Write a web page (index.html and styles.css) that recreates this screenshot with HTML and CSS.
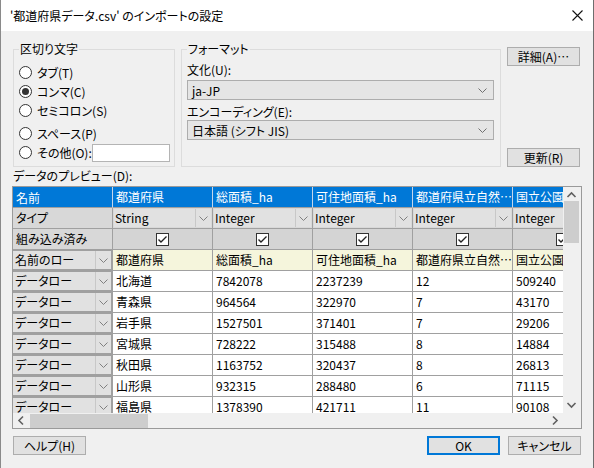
FILE: index.html
```html
<!DOCTYPE html>
<html lang="ja">

<head>
    <meta charset="UTF-8" />
    <title>インポートの設定</title>
    <link rel="stylesheet" href="styles.css">
</head>

<body>
    <div class="window">
        <!-- Title bar -->
        <div class="titlebar">
            <span class="title">'都道府県データ.csv' のインポートの設定</span>
            <svg class="close" width="11" height="11" viewBox="0 0 11 11">
                <path d="M0.5 0.5L10.5 10.5M10.5 0.5L0.5 10.5" stroke="#111" stroke-width="1.1" fill="none" />
            </svg>
        </div>

        <div class="content">
            <!-- Options -->
            <div class="top">
                <fieldset class="group delim">
                    <legend>区切り文字</legend>
                    <div class="radio"><span class="circle"></span>タブ(T)</div>
                    <div class="radio"><span class="circle checked"></span>コンマ(C)</div>
                    <div class="radio"><span class="circle"></span>セミコロン(S)</div>
                    <div class="radio space"><span class="circle"></span>スペース(P)</div>
                    <div class="radio"><span class="circle"></span>その他(O):<span class="textbox"></span></div>
                </fieldset>

                <fieldset class="group format">
                    <legend>フォーマット</legend>
                    <div class="field-label">文化(U):</div>
                    <div class="combo">
                        <span>ja-JP</span>
                        <svg width="9" height="5" viewBox="0 0 9 5"><path d="M0.5 0.5L4.5 4.5L8.5 0.5" stroke="#707070" fill="none" /></svg>
                    </div>
                    <div class="field-label second">エンコーディング(E):</div>
                    <div class="combo">
                        <span>日本語 (シフト JIS)</span>
                        <svg width="9" height="5" viewBox="0 0 9 5"><path d="M0.5 0.5L4.5 4.5L8.5 0.5" stroke="#707070" fill="none" /></svg>
                    </div>
                </fieldset>

                <div class="side-buttons">
                    <button class="btn">詳細(A)…</button>
                    <button class="btn">更新(R)</button>
                </div>
            </div>

            <div class="preview-label">データのプレビュー(D):</div>

            <!-- Preview grid -->
            <div class="grid">
                <div class="grid-main">
                    <div class="viewport">
                        <div class="row head">
                            <div class="cell rh">名前</div>
                            <div class="cell">都道府県</div>
                            <div class="cell">総面積_ha</div>
                            <div class="cell">可住地面積_ha</div>
                            <div class="cell">都道府県立自然…</div>
                            <div class="cell">国立公園面積_ha</div>
                        </div>
                        <div class="row types">
                            <div class="cell rh">タイプ</div>
                            <div class="cell"><div class="cb"><span>String</span><i class="dd"></i></div></div>
                            <div class="cell"><div class="cb"><span>Integer</span><i class="dd"></i></div></div>
                            <div class="cell"><div class="cb"><span>Integer</span><i class="dd"></i></div></div>
                            <div class="cell"><div class="cb"><span>Integer</span><i class="dd"></i></div></div>
                            <div class="cell"><div class="cb"><span>Integer</span><i class="dd"></i></div></div>
                        </div>
                        <div class="row checks">
                            <div class="cell rh">組み込み済み</div>
                            <div class="cell"><span class="check"></span></div>
                            <div class="cell"><span class="check"></span></div>
                            <div class="cell"><span class="check"></span></div>
                            <div class="cell"><span class="check"></span></div>
                            <div class="cell"><span class="check"></span></div>
                        </div>
                        <div class="row names">
                            <div class="cell rh"><div class="cb"><span>名前のロー</span><i class="dd"></i></div></div>
                            <div class="cell">都道府県</div>
                            <div class="cell">総面積_ha</div>
                            <div class="cell">可住地面積_ha</div>
                            <div class="cell">都道府県立自然…</div>
                            <div class="cell">国立公園面積_ha</div>
                        </div>
                        <div class="row">
                            <div class="cell rh"><div class="cb"><span>データロー</span><i class="dd"></i></div></div>
                            <div class="cell">北海道</div><div class="cell">7842078</div><div class="cell">2237239</div><div class="cell">12</div><div class="cell">509240</div>
                        </div>
                        <div class="row">
                            <div class="cell rh"><div class="cb"><span>データロー</span><i class="dd"></i></div></div>
                            <div class="cell">青森県</div><div class="cell">964564</div><div class="cell">322970</div><div class="cell">7</div><div class="cell">43170</div>
                        </div>
                        <div class="row">
                            <div class="cell rh"><div class="cb"><span>データロー</span><i class="dd"></i></div></div>
                            <div class="cell">岩手県</div><div class="cell">1527501</div><div class="cell">371401</div><div class="cell">7</div><div class="cell">29206</div>
                        </div>
                        <div class="row">
                            <div class="cell rh"><div class="cb"><span>データロー</span><i class="dd"></i></div></div>
                            <div class="cell">宮城県</div><div class="cell">728222</div><div class="cell">315488</div><div class="cell">8</div><div class="cell">14884</div>
                        </div>
                        <div class="row">
                            <div class="cell rh"><div class="cb"><span>データロー</span><i class="dd"></i></div></div>
                            <div class="cell">秋田県</div><div class="cell">1163752</div><div class="cell">320437</div><div class="cell">8</div><div class="cell">26813</div>
                        </div>
                        <div class="row">
                            <div class="cell rh"><div class="cb"><span>データロー</span><i class="dd"></i></div></div>
                            <div class="cell">山形県</div><div class="cell">932315</div><div class="cell">288480</div><div class="cell">6</div><div class="cell">71115</div>
                        </div>
                        <div class="row">
                            <div class="cell rh"><div class="cb"><span>データロー</span><i class="dd"></i></div></div>
                            <div class="cell">福島県</div><div class="cell">1378390</div><div class="cell">421711</div><div class="cell">11</div><div class="cell">90108</div>
                        </div>
                    </div>

                    <!-- vertical scrollbar -->
                    <div class="vscroll">
                        <svg class="arrow" width="17" height="17" viewBox="0 0 17 17"><path d="M4.5 10L8.5 6L12.5 10" stroke="#606060" stroke-width="1.6" fill="none" /></svg>
                        <div class="vtrack"><div class="vthumb"></div></div>
                        <svg class="arrow" width="17" height="17" viewBox="0 0 17 17"><path d="M4.5 7L8.5 11L12.5 7" stroke="#606060" stroke-width="1.6" fill="none" /></svg>
                    </div>
                </div>

                <div class="grid-foot">
                    <div class="hscroll">
                        <svg class="arrow" width="17" height="15" viewBox="0 0 17 15"><path d="M10 3.5L6 7.5L10 11.5" stroke="#606060" stroke-width="1.6" fill="none" /></svg>
                        <div class="htrack"><div class="hthumb"></div></div>
                        <svg class="arrow" width="17" height="15" viewBox="0 0 17 15"><path d="M7 3.5L11 7.5L7 11.5" stroke="#606060" stroke-width="1.6" fill="none" /></svg>
                    </div>
                    <div class="corner"></div>
                </div>
            </div>

            <!-- Dialog buttons -->
            <div class="bottom">
                <button class="btn">ヘルプ(H)</button>
                <div class="spacer"></div>
                <button class="btn default">OK</button>
                <button class="btn">キャンセル</button>
            </div>
        </div>
    </div>
</body>

</html>
```

FILE: styles.css
```css
/* === Base === */
* {
    margin: 0;
    padding: 0;
    box-sizing: border-box;
}

body {
    font-family: "Noto Sans CJK JP", sans-serif;
    font-size: 12px;
    font-feature-settings: "palt" 1;
    color: #000000;
    background-color: #f0f0f0;
}

.window {
    width: 594px;
    height: 468px;
    background-color: #f0f0f0;
    border-left: 1px solid #8a8a8a;
    border-right: 1px solid #6e6e6e;
    overflow: hidden;
}

/* === Title bar === */
.titlebar {
    height: 31px;
    background-color: #ffffff;
    display: flex;
    align-items: center;
    padding-left: 9px;
    padding-right: 10px;
}

.title {
    flex: 1;
    line-height: 16px;
}

.close {
    display: block;
}

/* === Content === */
.content {
    padding: 10px 12px 0 12px;
}

.top {
    display: flex;
    gap: 6px;
    height: 126px;
}

.group {
    border: 1px solid #dcdcdc;
    margin: 0;
    min-width: 0;
    height: 126px;
}

.group legend {
    line-height: 16px;
    padding: 0 1px;
    margin-left: 0;
}

.delim {
    width: 162px;
    padding: 6px 4px 0 5px;
}

.format {
    width: 320px;
    padding: 5px 6px 0 5px;
}

/* radios */
.radio {
    display: flex;
    align-items: center;
    height: 19px;
    white-space: nowrap;
}

.radio.space {
    margin-top: 4px;
}

.circle {
    flex-shrink: 0;
    width: 13px;
    height: 13px;
    border: 1px solid #333333;
    border-radius: 50%;
    background-color: #ffffff;
    margin-right: 5px;
    display: flex;
    align-items: center;
    justify-content: center;
}

.circle.checked::after {
    content: "";
    width: 7px;
    height: 7px;
    border-radius: 50%;
    background-color: #333333;
}

.textbox {
    flex-shrink: 0;
    width: 78px;
    height: 18px;
    margin-left: auto;
    border: 1px solid #b4b4b4;
    background-color: #ffffff;
}

/* format fields */
.field-label {
    line-height: 16px;
    height: 16px;
}

.field-label.second {
    margin-top: 4px;
}

.combo {
    margin-top: 2px;
    height: 20px;
    border: 1px solid #adadad;
    background-color: #e5e5e5;
    display: flex;
    align-items: center;
    justify-content: space-between;
    padding: 0 6px 0 4px;
}

.field-label.second + .combo {
    margin-top: 0;
}

.side-buttons {
    width: 73px;
    padding-top: 6px;
    display: flex;
    flex-direction: column;
    justify-content: space-between;
}

.btn {
    width: 73px;
    height: 19px;
    font-family: inherit;
    font-size: 12px;
    font-feature-settings: "palt" 1;
    background-color: #e1e1e1;
    border: 1px solid #adadad;
    color: #000000;
    line-height: 16px;
}

.btn.default {
    border: 2px solid #0078d7;
}

.preview-label {
    margin-top: 1px;
    line-height: 16px;
    height: 16px;
}

/* === Preview grid === */
.grid {
    margin: 2px -1px 0 -1px;
    border: 1px solid #9a9a9a;
    background-color: #f0f0f0;
}

.grid-main {
    display: flex;
}

.viewport {
    width: 550px;
    height: 226px;
    overflow: hidden;
    background-color: #ffffff;
}

.row {
    display: flex;
    height: 21px;
    width: max-content;
}

.cell {
    flex-shrink: 0;
    width: 100px;
    height: 21px;
    border-right: 1px solid #a0a0a0;
    border-bottom: 1px solid #a0a0a0;
    padding-left: 3px;
    line-height: 20px;
    white-space: nowrap;
    overflow: hidden;
}

.cell.rh {
    background-color: #a0a0a0;
    padding: 1px 1px 1px 0;
    border-right: 1px solid #a0a0a0;
}

.head .cell {
    background-color: #0078d7;
    color: #ffffff;
    border-right-color: #c4d6ea;
    border-bottom-color: #a0a0a0;
    padding-left: 3px;
}

.types .cell.rh,
.checks .cell.rh {
    background-color: #d8d8d8;
    padding: 0 0 0 3px;
}

.types .cell {
    padding: 1px 1px 1px 1px;
    background-color: #d8d8d8;
}

.checks .cell {
    background-color: #d4d4d4;
    display: flex;
    align-items: center;
    justify-content: center;
    padding: 0;
}

.checks .cell.rh {
    justify-content: flex-start;
    padding-left: 3px;
}

.names .cell {
    background-color: #f5f5dc;
}

.names .cell.rh {
    background-color: #a0a0a0;
}

/* combo inside grid cells */
.cb {
    display: flex;
    height: 18px;
    background-color: #e1e1e1;
    line-height: 18px;
}

.cb span {
    flex: 1;
    padding-left: 2px;
    overflow: hidden;
}

.types .cb span {
    padding-left: 1px;
}

.dd {
    width: 16px;
    border-left: 1px solid #c8c8c8;
    background: url("data:image/svg+xml,%3Csvg xmlns='http://www.w3.org/2000/svg' width='9' height='5'%3E%3Cpath d='M0.5 0.5L4.5 4.5L8.5 0.5' stroke='%23808080' fill='none'/%3E%3C/svg%3E") center no-repeat;
}

.check {
    width: 13px;
    height: 13px;
    border: 1px solid #333333;
    background: #ffffff url("data:image/svg+xml,%3Csvg xmlns='http://www.w3.org/2000/svg' width='11' height='11'%3E%3Cpath d='M1.5 5.5L4 8L9.5 2.5' stroke='%23222' stroke-width='1.4' fill='none'/%3E%3C/svg%3E") center no-repeat;
}

/* scrollbars */
.vscroll {
    width: 17px;
    height: 226px;
    display: flex;
    flex-direction: column;
    background-color: #f0f0f0;
}

.arrow {
    display: block;
    flex-shrink: 0;
}

.vtrack {
    flex: 1;
    padding: 0 1px;
}

.vthumb {
    width: 15px;
    height: 42px;
    margin-top: -3px;
    background-color: #cdcdcd;
}

.grid-foot {
    display: flex;
    height: 15px;
}

.hscroll {
    width: 550px;
    display: flex;
    background-color: #f0f0f0;
}

.htrack {
    flex: 1;
    padding: 1px 0 0 0;
}

.hthumb {
    width: 118px;
    height: 14px;
    background-color: #cdcdcd;
}

.corner {
    width: 17px;
    background-color: #f0f0f0;
}

/* === Bottom buttons === */
.bottom {
    display: flex;
    margin-top: 7px;
    gap: 8px;
}

.spacer {
    flex: 1;
}
```
